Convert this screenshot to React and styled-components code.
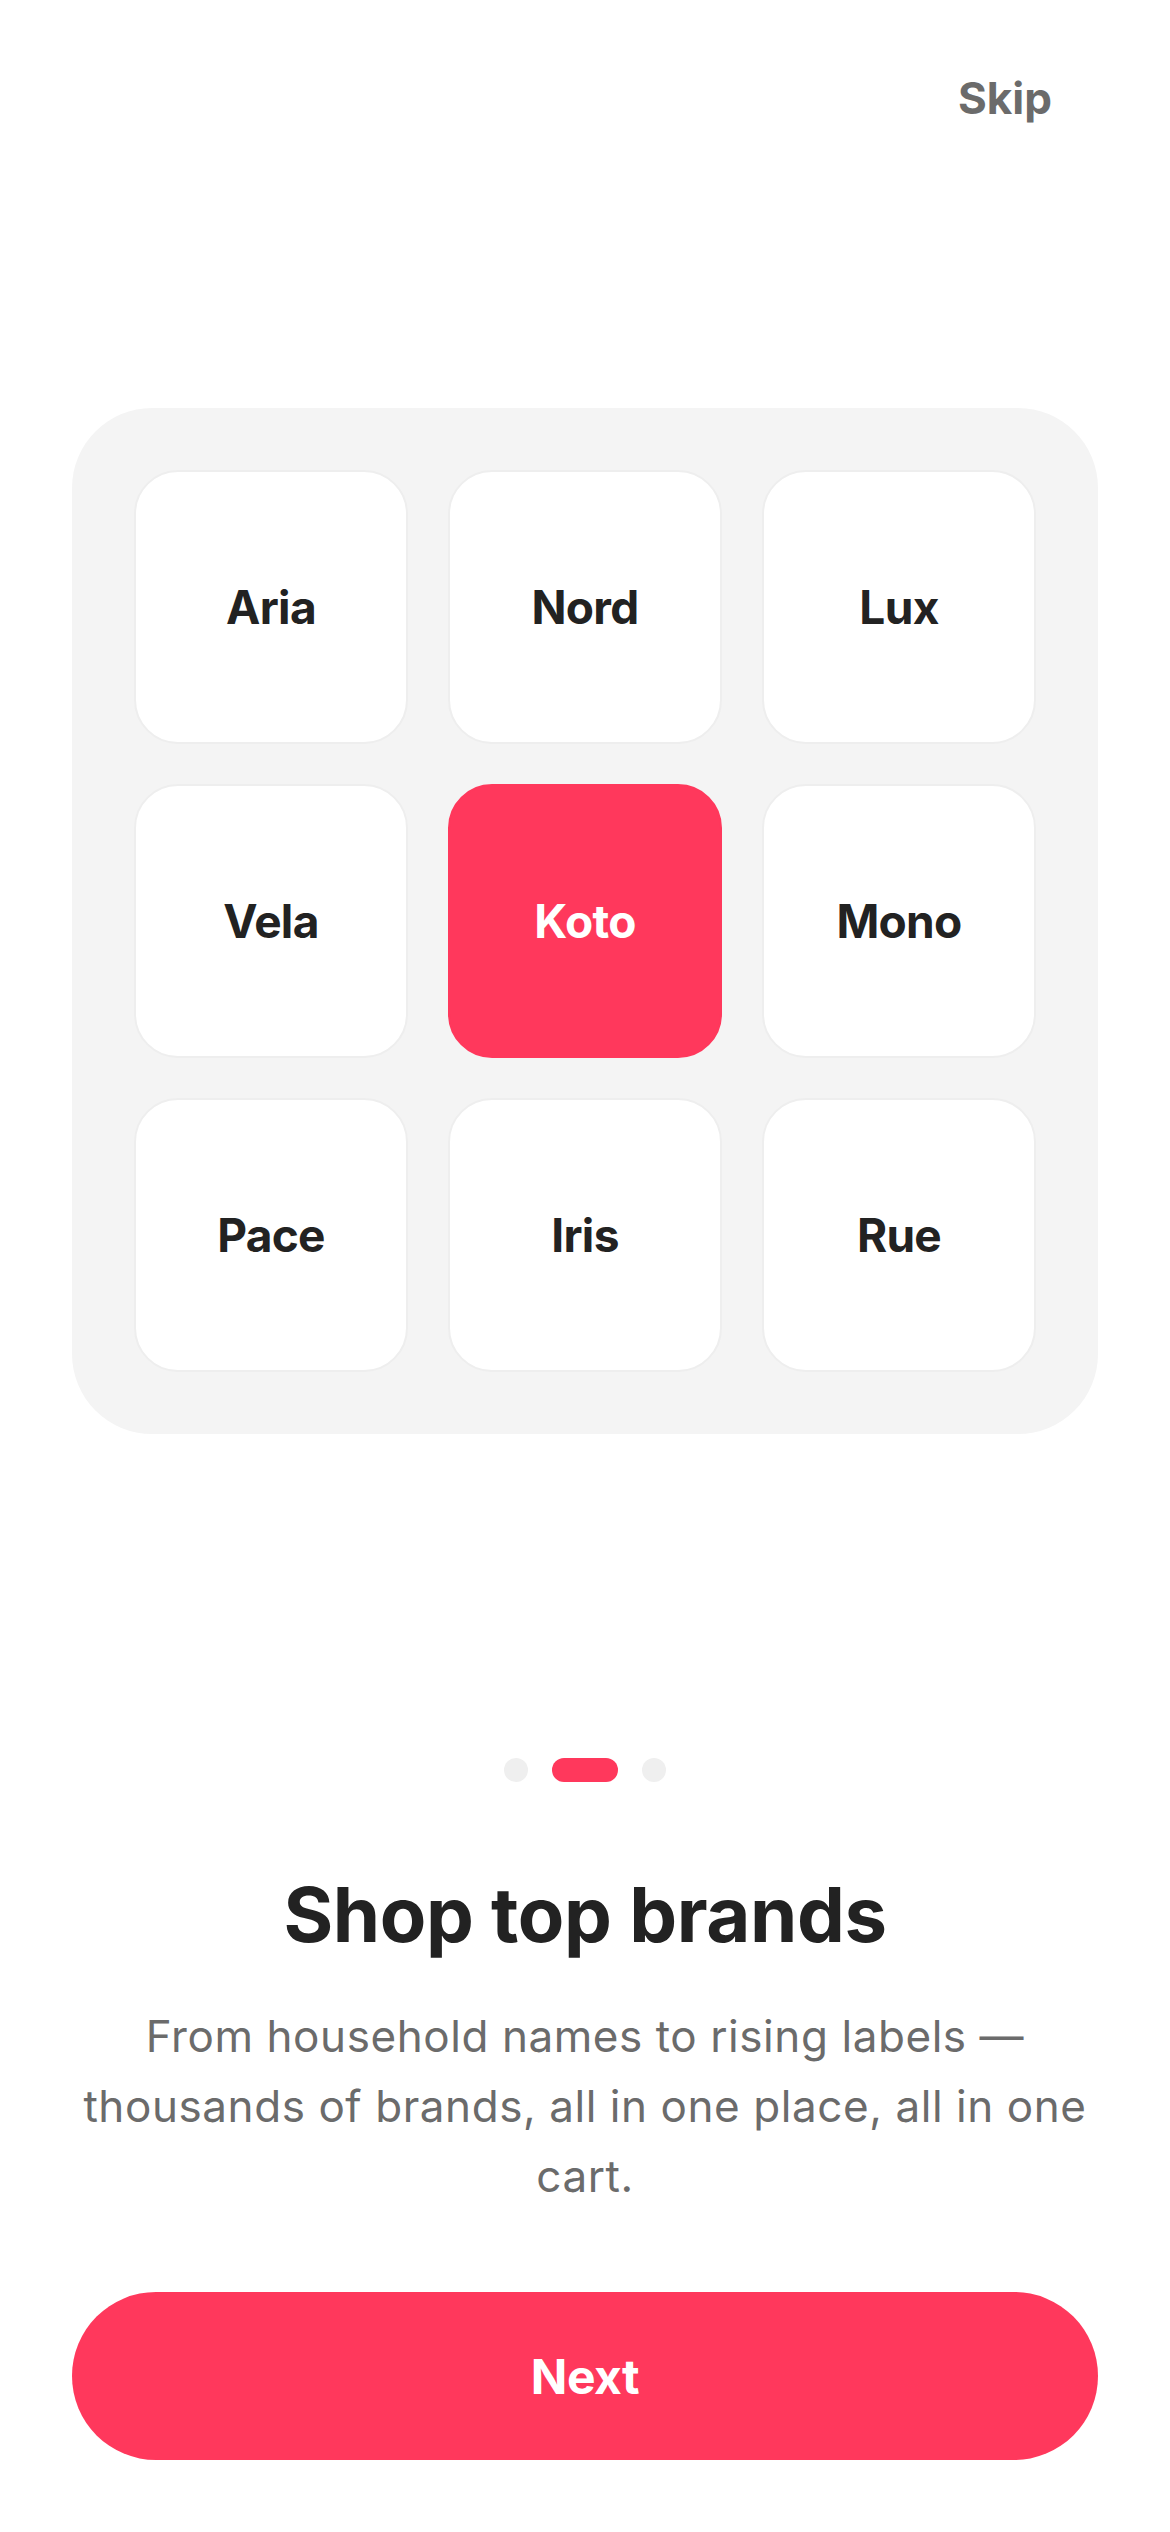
import styled, { createGlobalStyle } from 'styled-components'

const GlobalStyle = createGlobalStyle`
    html, body {
        margin: 0;
        padding: 0;
        background: #FFF;
    }
    body {
        font-family: Inter, "Noto Sans", "Liberation Sans", sans-serif;
        -webkit-font-smoothing: antialiased;
    }
`

const Page = styled.div`
    width: 1170px;
    min-height: 2532px;
    box-sizing: border-box;
    padding: 0 72px 72px;
    display: flex;
    flex-direction: column;
`

const Header = styled.header`
    height: 196px;
    display: flex;
    align-items: center;
    justify-content: flex-end;
    padding-right: 46px;
`

const SkipButton = styled.button`
    background: none;
    border: none;
    padding: 0;
    font-family: inherit;
    font-size: 44px;
    line-height: 1;
    font-weight: 700;
    color: #6B6B6B;
    letter-spacing: 0;
    cursor: pointer;
`

const BrandPanel = styled.div`
    margin-top: 212px;
    background: #F4F4F4;
    border-radius: 80px;
    padding: 62px;
    display: grid;
    grid-template-columns: repeat(3, 1fr);
    gap: 40px;
`

const BrandTile = styled.div`
    aspect-ratio: 1;
    box-sizing: border-box;
    border-radius: 44px;
    border: 2px solid ${props => props.$active ? '#FF385C' : '#EEEEEE'};
    background: ${props => props.$active ? '#FF385C' : '#FFF'};
    color: ${props => props.$active ? '#FFF' : '#222'};
    display: flex;
    align-items: center;
    justify-content: center;
    font-size: 46px;
    font-weight: 700;
    letter-spacing: -0.015em;
`

const Dots = styled.div`
    margin-top: 324px;
    display: flex;
    justify-content: center;
    gap: 24px;
`

const Dot = styled.span`
    height: 24px;
    width: ${props => props.$active ? '66px' : '24px'};
    border-radius: 12px;
    background: ${props => props.$active ? '#FF385C' : '#EFEFEF'};
`

const Titulo = styled.h1`
    margin: 87px 0 0;
    text-align: center;
    font-size: 76px;
    line-height: 91px;
    font-weight: 700;
    letter-spacing: -0.005em;
    color: #222;
`

const Descricao = styled.p`
    margin: 41px 0 0;
    text-align: center;
    font-size: 44px;
    line-height: 70px;
    font-weight: 400;
    color: #6B6B6B;
    letter-spacing: 0.013em;
`

const NextButton = styled.button`
    margin-top: 81px;
    height: 168px;
    width: 100%;
    border: none;
    border-radius: 84px;
    background: #FF385C;
    color: #FFF;
    font-family: inherit;
    font-size: 48px;
    font-weight: 700;
    letter-spacing: -0.01em;
    cursor: pointer;
`

const brands = ['Aria', 'Nord', 'Lux', 'Vela', 'Koto', 'Mono', 'Pace', 'Iris', 'Rue']

function App() {
    return (
        <>
            <GlobalStyle />
            <Page>
                <Header>
                    <SkipButton>Skip</SkipButton>
                </Header>
                <BrandPanel>
                    {brands.map(nome => (
                        <BrandTile key={nome} $active={nome === 'Koto'}>{nome}</BrandTile>
                    ))}
                </BrandPanel>
                <Dots>
                    <Dot />
                    <Dot $active />
                    <Dot />
                </Dots>
                <Titulo>Shop top brands</Titulo>
                <Descricao>
                    From household names to rising labels — thousands of brands, all in one place, all in one cart.
                </Descricao>
                <NextButton>Next</NextButton>
            </Page>
        </>
    )
}

export default App
